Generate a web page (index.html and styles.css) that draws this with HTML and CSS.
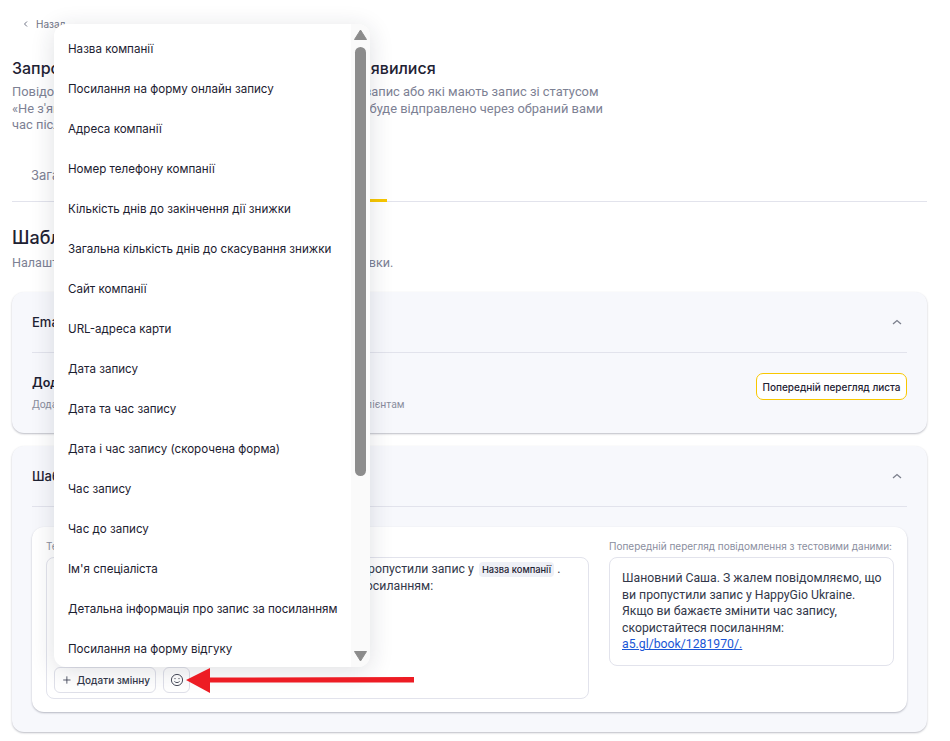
FILE: index.html
```html
<!DOCTYPE html>
<html lang="uk">
<head>
<meta charset="utf-8">
<title>Шаблони повідомлень</title>
<link rel="stylesheet" href="styles.css">
</head>
<body>
<main class="page">
  <a class="back"><svg class="back-icon" viewBox="0 0 8 8" width="8" height="8"><path d="M5 1.5 2.5 4 5 6.5" fill="none" stroke="#6f7385" stroke-width="1"/></svg>Назад</a>
  <h1 class="title">Запрошення клієнтів, які записалися, та не з'явилися</h1>
  <p class="desc">Повідомлення для всіх клієнтів, для яких було скасовано запис або які мають запис зі статусом<br>«Не з'явився». Нагадайте клієнту про візит. Повідомлення буде відправлено через обраний вами<br>час після запису.</p>
  <nav class="tabs">
    <span class="tab">Загальні налаштування</span>
    <span class="tab tab-active">Шаблони</span>
  </nav>
  <h2 class="section">Шаблони повідомлень</h2>
  <p class="section-sub">Налаштуйте шаблони, які отримають клієнти після їх відправки.</p>

  <section class="card">
    <header class="card-head"><span>Email повідомлення</span><svg class="chev" viewBox="0 0 10 6" width="10" height="6"><path d="M1 5 5 1.5 9 5" fill="none" stroke="#7b7f8c" stroke-width="1.3"/></svg></header>
    <div class="row">
      <div>
        <div class="row-title">Додати логотип</div>
        <div class="row-sub">Додайте логотип компанії до всіх листів, які надсилаються вашим клієнтам</div>
      </div>
      <button class="preview-btn">Попередній перегляд листа</button>
    </div>
  </section>

  <section class="card">
    <header class="card-head"><span>Шаблон SMS</span><svg class="chev" viewBox="0 0 10 6" width="10" height="6"><path d="M1 5 5 1.5 9 5" fill="none" stroke="#7b7f8c" stroke-width="1.3"/></svg></header>
    <div class="inner">
      <div class="col-edit">
        <div class="label">Текст повідомлення</div>
        <div class="editor">
          <div class="editor-text">Шановний клієнте. З жалем повідомляємо, що ви пропустили запис у <span class="chip">Назва компанії</span> .<br>Якщо бажаєте змінити час запису, скористайтесь посиланням:</div>
          <div class="editor-tools">
            <button class="tool"><svg viewBox="0 0 12 12" width="12" height="12"><path d="M6 1.5v9M1.5 6h9" fill="none" stroke="#33384a" stroke-width="1"/></svg>Додати змінну</button>
            <button class="tool tool-icon"><svg viewBox="0 0 14 14" width="14" height="14"><circle cx="7" cy="7" r="5.6" fill="none" stroke="#4a4e5c" stroke-width="1"/><circle cx="5" cy="5.6" r=".7" fill="#4a4e5c"/><circle cx="9" cy="5.6" r=".7" fill="#4a4e5c"/><path d="M4.4 8.4c1.4 1.6 3.8 1.6 5.2 0" fill="none" stroke="#4a4e5c" stroke-width="1"/></svg></button>
          </div>
        </div>
      </div>
      <div class="col-preview">
        <div class="label">Попередній перегляд повідомлення з тестовими даними:</div>
        <div class="preview">Шановний Саша. З жалем повідомляємо, що ви пропустили запис у HappyGio Ukraine. Якщо ви бажаєте змінити час запису, скористайтеся посиланням: <a class="link">a5.gl/book/1281970/.</a></div>
      </div>
    </div>
  </section>
</main>

<div class="menu">
  <div class="menu-list">
    <div class="menu-item">Назва компанії</div>
    <div class="menu-item">Посилання на форму онлайн запису</div>
    <div class="menu-item">Адреса компанії</div>
    <div class="menu-item">Номер телефону компанії</div>
    <div class="menu-item">Кількість днів до закінчення дії знижки</div>
    <div class="menu-item">Загальна кількість днів до скасування знижки</div>
    <div class="menu-item">Сайт компанії</div>
    <div class="menu-item">URL-адреса карти</div>
    <div class="menu-item">Дата запису</div>
    <div class="menu-item">Дата та час запису</div>
    <div class="menu-item">Дата і час запису (скорочена форма)</div>
    <div class="menu-item">Час запису</div>
    <div class="menu-item">Час до запису</div>
    <div class="menu-item">Ім'я спеціаліста</div>
    <div class="menu-item">Детальна інформація про запис за посиланням</div>
    <div class="menu-item">Посилання на форму відгуку</div>
  </div>
  <div class="track">
    <svg class="sb-up" viewBox="0 0 13 11" width="13" height="11"><path d="M6.5 1 12.5 10.5H.5Z" fill="#8c8c8c" stroke="#8c8c8c" stroke-linejoin="round"/></svg>
    <div class="thumb"></div>
    <svg class="sb-down" viewBox="0 0 13 11" width="13" height="11"><path d="M6.5 10 12.5 .5H.5Z" fill="#8c8c8c" stroke="#8c8c8c" stroke-linejoin="round"/></svg>
  </div>
</div>

<svg class="arrow" viewBox="0 0 232 28" width="232" height="28"><path d="M0 14 24 2V11.5L228 11V16.5L24 16.5V27Z" fill="#ed1c24"/></svg>
</body>
</html>
```
FILE: styles.css
```css
* { box-sizing: border-box; }
html, body { margin: 0; padding: 0; background: #fff; }
body { font-family: Inter, "Noto Sans", sans-serif; color: #1e2233; height: 741px; overflow: hidden; position: relative; }
.page { padding: 17px 23px 0 12px; }
.back { display: flex; align-items: center; gap: 6px; padding-left: 10px; font-size: 10px; line-height: 14px; color: #6f7385; }
.title { margin: 27px 0 0; font-size: 16px; line-height: 20px; font-weight: 500; color: #1e2233; }
.desc { margin: 6px 0 0; font-family: Roboto, sans-serif; font-size: 12.9px; line-height: 16.5px; color: #7d8194; white-space: nowrap; }
.tabs { margin-top: 26px; height: 42px; border-bottom: 1px solid #e2e3ec; display: flex; gap: 20px; padding-left: 19px; }
.tab { font-size: 13px; line-height: 16px; padding-top: 7px; color: #7d8194; width: 210px; white-space: nowrap; }
.tab-active { position: relative; width: 126px; padding-left: 10px; border-bottom: 3px solid #f8c700; height: 42px; }
.section { margin: 25.5px 0 0; font-size: 18px; line-height: 22px; font-weight: 500; color: #1e2233; }
.section-sub { margin: 6px 0 0; font-family: Roboto, sans-serif; font-size: 12.6px; line-height: 16px; color: #7d8194; }
.card { margin-top: 21px; background: #f7f8fc; border-radius: 12px; padding: 0 20px; box-shadow: 0 1px 2px rgba(30, 34, 60, .3); }
.card + .card { margin-top: 13px; padding-bottom: 20px; }
.card-head { height: 61px; border-bottom: 1px solid #e2e3ec; display: flex; align-items: center; justify-content: space-between; font-size: 13px; font-weight: 500; color: #1e2233; padding: 0 5px 0 0; }
.row { height: 80px; display: flex; align-items: center; justify-content: space-between; }
.row-title { font-size: 12.5px; line-height: 16px; font-weight: 600; color: #1e2233; }
.row-sub { margin-top: 7px; font-family: Roboto, sans-serif; font-size: 10.4px; line-height: 14px; color: #8a8e9e; }
.preview-btn { height: 27px; width: 151px; margin-top: -13px; padding: 0; border: 1px solid #f8c700; border-radius: 7px; background: #fff; font: 500 10px Inter, sans-serif; color: #1e2233; white-space: nowrap; }
.inner { margin-top: 20px; background: #fff; border-radius: 12px; height: 185px; padding: 13px 13px 0 14px; display: flex; gap: 20px; box-shadow: 0 1px 2px rgba(30, 34, 60, .3); }
.col-edit { width: 543px; }
.col-preview { width: 285px; }
.label { font-size: 10px; line-height: 12px; color: #8a8e9e; white-space: nowrap; }
.editor { margin-top: 5px; height: 142px; border: 1px solid #e2e3ec; border-radius: 8px; display: flex; flex-direction: column; justify-content: space-between; padding: 0 7px 5px; }
.editor-text { padding: 3px 0 0 15px; font-family: Roboto, sans-serif; font-size: 12.3px; line-height: 17px; color: #33384a; white-space: nowrap; }
.chip { display: inline-block; margin-left: 2px; padding: 0 3px; line-height: 15px; font-family: Inter, sans-serif; font-size: 9.3px; font-weight: 500; background: #eef0f6; border-radius: 4px; color: #1e2233; }
.editor-tools { display: flex; gap: 7px; }
.tool { height: 26px; padding: 0 5px 0 7px; display: flex; align-items: center; gap: 5px; background: #fff; border: 1px solid #dfe0e9; border-radius: 6px; font: 500 10px Inter, sans-serif; color: #33384a; width: 102px; white-space: nowrap; }
.tool-icon { width: 27px; padding: 0; justify-content: center; }
.preview { margin-top: 5px; height: 109px; border: 1px solid #e2e3ec; border-radius: 8px; padding: 12px 8px 0 12px; font-family: Roboto, sans-serif; font-size: 12.25px; line-height: 16.6px; color: #33384a; }
.link { color: #1a56d6; text-decoration: underline; }
.menu { position: absolute; left: 54px; top: 24px; width: 316px; height: 643px; background: #fff; border-radius: 12px; overflow: hidden; box-shadow: 0 4px 24px rgba(30, 34, 60, .14); z-index: 2; }
.menu-list { padding-top: 5px; }
.menu-item { height: 40px; padding-left: 14px; display: flex; align-items: center; font-size: 11.6px; color: #1c2030; white-space: nowrap; }
.track { position: absolute; right: 0; top: 0; bottom: 0; width: 19px; background: #fafafa; }
.sb-up { position: absolute; left: 3px; top: 5px; }
.sb-down { position: absolute; left: 3px; bottom: 5px; }
.thumb { position: absolute; left: 4px; top: 23px; width: 11px; height: 429px; background: #8c8c8c; border-radius: 6px; }
.arrow { position: absolute; left: 186px; top: 666px; z-index: 3; }
```
